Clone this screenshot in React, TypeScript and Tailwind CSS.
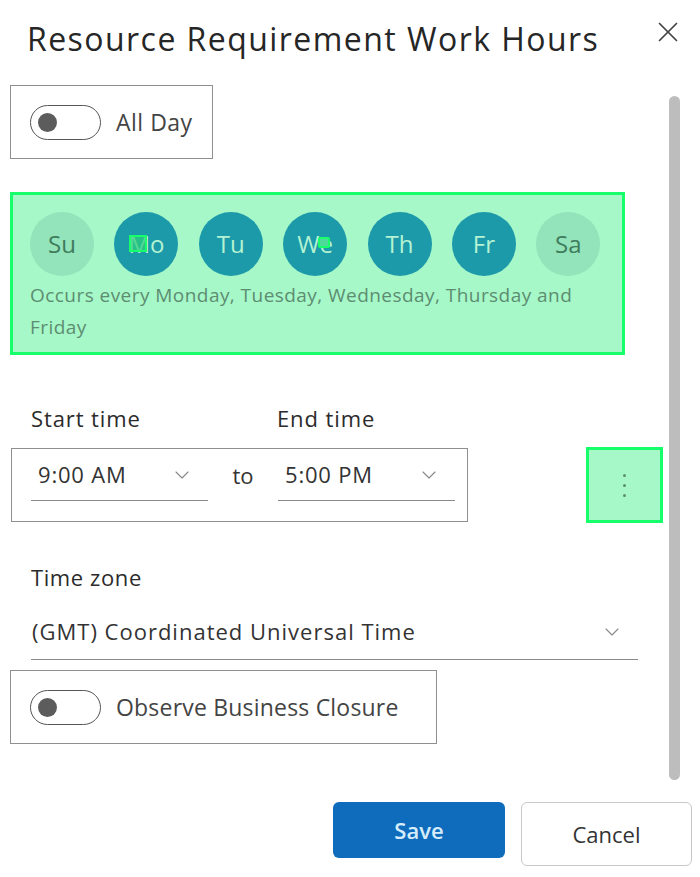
import { X, ChevronDown } from "lucide-react";

const days = [
  { label: "Su", on: false },
  { label: "Mo", on: true },
  { label: "Tu", on: true },
  { label: "We", on: true },
  { label: "Th", on: true },
  { label: "Fr", on: true },
  { label: "Sa", on: false },
];

function Toggle() {
  return (
    <div className="w-[71px] h-[35px] rounded-full border-[1.5px] border-[#555] flex items-center pl-[7px]">
      <div className="w-[19px] h-[19px] rounded-full bg-[#5c5c5c]" />
    </div>
  );
}

function Dropdown({ value, width }: { value: string; width: string }) {
  return (
    <div className={`${width} h-[52px] border-b border-[#8a8a8a] flex items-center justify-between pl-[7px] pr-[14px]`}>
      <span className="text-[22px] tracking-[0.8px] text-[#333]">{value}</span>
      <ChevronDown className="w-[24px] h-[24px] text-[#888]" strokeWidth={1.1} />
    </div>
  );
}

function App() {
  return (
    <div
      className="w-[700px] h-[877px] bg-white flex flex-col overflow-hidden"
      style={{ fontFamily: '"Open Sans", "Noto Sans", sans-serif' }}
    >
      <header className="flex items-start justify-between pl-[27px] pr-[15px] pt-[16px]">
        <h1 className="text-[32px] leading-[46px] text-[#262626] tracking-[1.45px]">
          Resource Requirement Work Hours
        </h1>
        <X className="w-[34px] h-[34px] text-[#444] mt-[-1px]" strokeWidth={1.2} />
      </header>

      <div className="flex flex-1">
        <div className="flex-1 min-w-0 flex flex-col">
          <div className="ml-[10px] mt-[23px] w-[203px] h-[74px] border border-[#8f8f8f] flex items-center gap-[15px] pl-[19px]">
            <Toggle />
            <span className="text-[23px] tracking-[0.5px] text-[#444]">All Day</span>
          </div>

          <div className="ml-[10px] mt-[33px] w-[615px] h-[163px] border-[3px] border-[#17ff6a] bg-[#a6f8c9] pl-[17px] pt-[17px]">
            <div className="flex gap-[20.4px]">
              {days.map((d) => (
                <div
                  key={d.label}
                  className={`relative w-[64px] h-[64px] rounded-full flex items-center justify-center text-[24px] ${
                    d.on ? "bg-[#1c9aaa] text-[#b4f2d2]" : "bg-[#93e3bb] text-[#3f7c5c]"
                  }`}
                >
                  {d.label}
                  {d.label === "Mo" && (
                    <div className="absolute left-[15px] top-[23px] w-[18px] h-[17px] border-[2px] border-[#17ff6a] bg-[#2ed07a]/70" />
                  )}
                  {d.label === "We" && (
                    <div className="absolute left-[35px] top-[25px] w-[12px] h-[11px] border-[2px] border-[#17ff6a] bg-[#4fd99a] rounded-[2px]" />
                  )}
                </div>
              ))}
            </div>
            <p className="mt-[3px] w-[565px] text-[19px] leading-[32px] tracking-[0.45px] text-[#5d8d70]">
              Occurs every Monday, Tuesday, Wednesday, Thursday and Friday
            </p>
          </div>

          <div className="flex ml-[31px] mt-[47px] text-[22px] tracking-[0.9px] text-[#2b2b2b] font-medium">
            <span className="w-[246px]">Start time</span>
            <span>End time</span>
          </div>

          <div className="flex items-center mt-[12px]">
            <div className="ml-[11px] w-[457px] h-[74px] border border-[#8f8f8f] flex items-start pl-[19px]">
              <Dropdown value="9:00 AM" width="w-[177px]" />
              <span className="w-[70px] text-center text-[22px] text-[#333] mt-[10px]">to</span>
              <Dropdown value="5:00 PM" width="w-[177px]" />
            </div>
            <div className="ml-[118px] w-[77px] h-[76px] border-[3px] border-[#17ff6a] bg-[#a6f8c9] flex flex-col items-center justify-center gap-[7px]">
              <div className="w-[3px] h-[3px] rounded-full bg-[#5d8d70]" />
              <div className="w-[3px] h-[3px] rounded-full bg-[#5d8d70]" />
              <div className="w-[3px] h-[3px] rounded-full bg-[#5d8d70]" />
            </div>
          </div>

          <span className="ml-[31px] mt-[38px] text-[22px] tracking-[0.6px] text-[#2b2b2b] font-medium">Time zone</span>

          <div className="ml-[31px] w-[607px] h-[56px] border-b border-[#8a8a8a] flex items-center justify-between pl-[1px] pr-[14px] mt-[10px]">
            <span className="text-[22px] tracking-[1px] text-[#333]">(GMT) Coordinated Universal Time</span>
            <ChevronDown className="w-[24px] h-[24px] text-[#888]" strokeWidth={1.1} />
          </div>

          <div className="ml-[10px] mt-[10px] w-[427px] h-[74px] border border-[#8f8f8f] flex items-center gap-[15px] pl-[19px]">
            <Toggle />
            <span className="text-[23px] tracking-[0.2px] text-[#444]">Observe Business Closure</span>
          </div>

          <div className="flex gap-[16px] ml-[333px] mt-[58px]">
            <button className="shrink-0 w-[172px] h-[56px] rounded-[6px] bg-[#0f6cbd] text-[#d6ecfb] text-[22px] font-semibold">
              Save
            </button>
            <button className="shrink-0 w-[171px] h-[64px] rounded-[6px] border border-[#c8c8c8] bg-white text-[#333] text-[22px]">
              Cancel
            </button>
          </div>
        </div>
        <div className="w-[31px] shrink-0 flex pt-[34px] pb-[97px]">
          <div className="w-[11px] h-full rounded-full bg-[#bdbdbd]" />
        </div>
      </div>
    </div>
  );
}

export default App;
